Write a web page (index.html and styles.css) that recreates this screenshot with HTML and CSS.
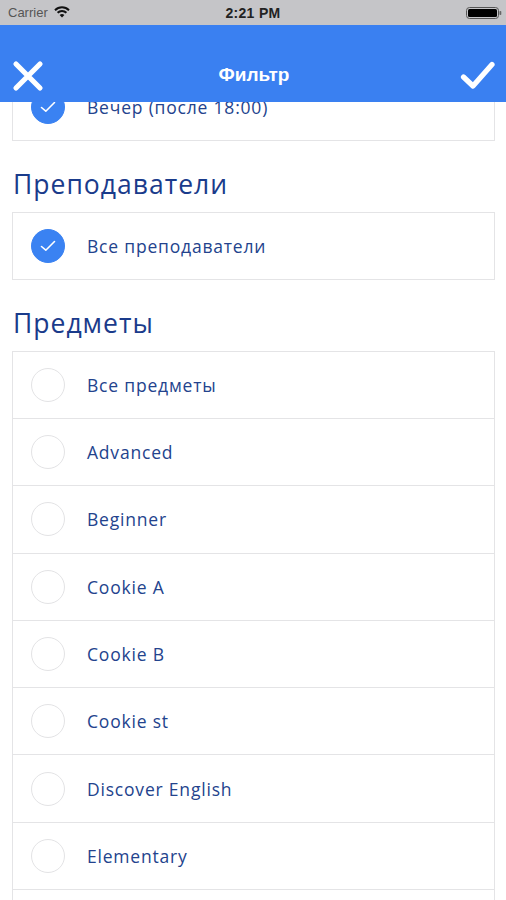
FILE: index.html
```html
<!DOCTYPE html>
<html lang="ru">
<head>
<meta charset="utf-8">
<title>Фильтр</title>
<link rel="stylesheet" href="styles.css">
</head>
<body>
<header class="top">
  <div class="status">
    <div class="status-left">
      <span class="carrier">Carrier</span>
      <svg class="wifi" width="16" height="12" viewBox="0 0 16 12">
        <path d="M1 4.2 A10 10 0 0 1 15 4.2" fill="none" stroke="#111" stroke-width="2"/>
        <path d="M3.6 6.8 A6.2 6.2 0 0 1 12.4 6.8" fill="none" stroke="#111" stroke-width="2"/>
        <path d="M8 11.5 L5.6 9.1 A3.4 3.4 0 0 1 10.4 9.1 Z" fill="#111"/>
      </svg>
    </div>
    <span class="time">2:21 PM</span>
    <div class="status-right">
      <svg class="battery" width="36" height="12" viewBox="0 0 36 12">
        <rect x="0.5" y="0.5" width="32" height="11" rx="3" fill="none" stroke="#555" stroke-width="1"/>
        <rect x="2" y="2" width="29" height="8" rx="1.5" fill="#000"/>
        <rect x="33.5" y="4" width="1.8" height="4" rx="0.8" fill="#666"/>
      </svg>
    </div>
  </div>
  <nav class="navbar">
    <button class="nav-btn" aria-label="Закрыть">
      <svg width="32" height="32" viewBox="0 0 32 32">
        <path d="M4 4 L28 28 M28 4 L4 28" stroke="#fff" stroke-width="5.2" stroke-linecap="round"/>
      </svg>
    </button>
    <h1 class="nav-title">Фильтр</h1>
    <button class="nav-btn" aria-label="Применить">
      <svg width="36" height="32" viewBox="0 0 36 32">
        <path d="M3.5 17 L13 26 L32 4.5" fill="none" stroke="#fff" stroke-width="5.2" stroke-linecap="round" stroke-linejoin="round"/>
      </svg>
    </button>
  </nav>
</header>

<main class="content">
  <section class="card">
    <div class="row">
      <span class="radio checked"><svg width="16" height="12" viewBox="0 0 16 12"><path d="M1.5 6.5 L5.8 10.2 L14.5 1.5" fill="none" stroke="#fff" stroke-width="1.6" stroke-linecap="round" stroke-linejoin="round"/></svg></span>
      <span class="label">Вечер (после 18:00)</span>
    </div>
  </section>

  <h2 class="section-title">Преподаватели</h2>
  <section class="card">
    <div class="row">
      <span class="radio checked"><svg width="16" height="12" viewBox="0 0 16 12"><path d="M1.5 6.5 L5.8 10.2 L14.5 1.5" fill="none" stroke="#fff" stroke-width="1.6" stroke-linecap="round" stroke-linejoin="round"/></svg></span>
      <span class="label">Все преподаватели</span>
    </div>
  </section>

  <h2 class="section-title">Предметы</h2>
  <section class="card">
    <div class="row"><span class="radio"></span><span class="label">Все предметы</span></div>
    <div class="row"><span class="radio"></span><span class="label">Advanced</span></div>
    <div class="row"><span class="radio"></span><span class="label">Beginner</span></div>
    <div class="row"><span class="radio"></span><span class="label">Cookie A</span></div>
    <div class="row"><span class="radio"></span><span class="label">Cookie B</span></div>
    <div class="row"><span class="radio"></span><span class="label">Cookie st</span></div>
    <div class="row"><span class="radio"></span><span class="label">Discover English</span></div>
    <div class="row"><span class="radio"></span><span class="label">Elementary</span></div>
    <div class="row"></div>
  </section>
</main>
</body>
</html>
```

FILE: styles.css
```css
* { box-sizing: border-box; }
html, body {
  margin: 0;
  padding: 0;
  background: #fff;
  font-family: "Open Sans", "Liberation Sans", Arial, sans-serif;
  overflow: hidden;
}

.top {
  position: fixed;
  top: 0;
  left: 0;
  right: 0;
  z-index: 10;
}

.status {
  height: 25px;
  background: #c5c5c8;
  display: flex;
  align-items: center;
  justify-content: space-between;
  padding: 0 4px 0 8px;
  position: relative;
}
.status-left {
  display: flex;
  align-items: center;
  gap: 6px;
}
.carrier {
  font-family: "Liberation Sans", Arial, sans-serif;
  font-size: 13px;
  color: #555;
}
.wifi { margin-top: -1px; }
.time {
  position: absolute;
  left: 0;
  right: 0;
  text-align: center;
  font-family: "Liberation Sans", Arial, sans-serif;
  font-size: 14px;
  font-weight: bold;
  color: #222;
  letter-spacing: 0.3px;
  pointer-events: none;
}
.status-right {
  display: flex;
  align-items: center;
}

.navbar {
  height: 77px;
  background: #3a80f1;
  display: flex;
  align-items: flex-end;
  justify-content: space-between;
  padding: 0 10px 10px 12px;
}
.nav-btn {
  background: none;
  border: none;
  padding: 0;
  width: 36px;
  height: 32px;
  display: flex;
  align-items: center;
  justify-content: flex-start;
}
.nav-btn:last-child { justify-content: flex-end; }
.nav-title {
  margin: 0 0 6px;
  font-family: "Liberation Sans", Arial, sans-serif;
  font-size: 19px;
  font-weight: bold;
  color: #fff;
  line-height: 22px;
}

.content {
  padding: 73px 11px 0 12px;
}

.card {
  border: 1px solid #e4e4e6;
  background: #fff;
}

.row {
  height: 67.3px;
  display: flex;
  align-items: center;
  padding-left: 18px;
  border-top: 1px solid #e4e4e6;
}
.row:first-child {
  border-top: none;
  height: 66px;
}

.radio {
  width: 34px;
  height: 34px;
  border-radius: 50%;
  border: 1.5px solid #e3e3e5;
  flex: none;
  display: flex;
  align-items: center;
  justify-content: center;
}
.radio.checked {
  background: #3a82f2;
  border-color: #3a82f2;
}

.label {
  margin-left: 22px;
  font-size: 17.5px;
  color: #23438d;
  letter-spacing: 0.8px;
}

.section-title {
  margin: 28px 0 13px 1px;
  font-size: 26.5px;
  line-height: 30px;
  font-weight: normal;
  color: #1a3b8b;
  letter-spacing: 1px;
}
```
